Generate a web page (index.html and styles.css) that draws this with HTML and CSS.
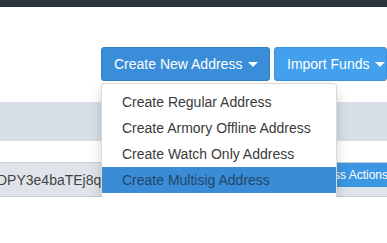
FILE: index.html
```html
<!DOCTYPE html>
<html lang="en">
	<head>
		<meta charset="utf-8">
		<title>Wallet</title>
		<link rel="stylesheet" href="styles.css">
	</head>

	<body>
		<div class="topbar"></div>
		<div class="toolbar">
			<div class="btn-group">
				<button class="btn btn-create">Create New Address <span class="caret"></span></button>
				<ul class="dropdown">
					<li><a>Create Regular Address</a></li>
					<li><a>Create Armory Offline Address</a></li>
					<li><a>Create Watch Only Address</a></li>
					<li class="active"><a>Create Multisig Address</a></li>
				</ul>
			</div>
			<button class="btn btn-import">Import Funds <span class="caret"></span></button>
		</div>
		<div class="band"></div>
		<div class="row">
			<div class="addr">DPY3e4baTEj8qlwVh</div>
			<button class="btn-small">Address Actions</button>
		</div>
	</body>
</html>
```

FILE: styles.css
```css
html, body {
	margin: 0;
	padding: 0;
	overflow: hidden;
	background: #fff;
	font-family: 'Liberation Sans', Arial, sans-serif;
	font-size: 14px;
	color: #333;
}

.topbar {
	height: 7px;
	background: #2b333e;
}

.toolbar {
	display: flex;
	gap: 4px;
	padding: 40px 0 0 101px;
	white-space: nowrap;
}

.btn-group {
	position: relative;
}

.btn {
	height: 34px;
	padding: 6px 12px;
	border-radius: 3px;
	font-family: 'Liberation Sans', Arial, sans-serif;
	font-size: 14px;
	line-height: 20px;
	color: #fff;
	cursor: pointer;
	display: flex;
	align-items: center;
	gap: 4px;
}

.btn-create {
	width: 169px;
	background: #3a8dd8;
	border: 1px solid #3180c6;
}

.btn-import {
	width: 113px;
	background: #42a0ec;
	border: 1px solid #3a94de;
}

.caret {
	display: inline-block;
	width: 0;
	height: 0;
	border-top: 5px solid #fff;
	border-left: 5px solid transparent;
	border-right: 5px solid transparent;
	margin-left: 2px;
}

.dropdown {
	position: absolute;
	top: 36px;
	left: 0;
	z-index: 2;
	width: 234px;
	margin: 0;
	padding: 5px 0;
	list-style: none;
	background: #fff;
	border: 1px solid rgba(0, 0, 0, 0.15);
	border-radius: 4px;
	box-shadow: 0 6px 12px rgba(0, 0, 0, 0.175);
}

.dropdown a {
	display: block;
	padding: 3px 20px;
	line-height: 20px;
	color: #3a3a3a;
	white-space: nowrap;
}

.dropdown .active a {
	background: #3a8cd6;
	color: #22456a;
}

.band {
	height: 39px;
	margin-top: 21px;
	background: #d7dee6;
}

.row {
	display: grid;
	grid-template-columns: 292px 95px;
	height: 33px;
	margin-top: 21px;
	background: #dfe4ea;
	border-top: 1px solid #c6cdd5;
	border-bottom: 1px solid #c6cdd5;
	white-space: nowrap;
}

.addr {
	overflow: hidden;
	margin-left: -3px;
	padding-top: 9px;
	line-height: 16px;
	color: #444;
}

.btn-small {
	align-self: start;
	height: 24px;
	padding: 0 10px;
	border: none;
	border-radius: 2px 0 0 2px;
	background: #3b97e3;
	color: #fff;
	font-family: 'Liberation Sans', Arial, sans-serif;
	font-size: 12px;
	text-align: left;
	overflow: hidden;
}
```
